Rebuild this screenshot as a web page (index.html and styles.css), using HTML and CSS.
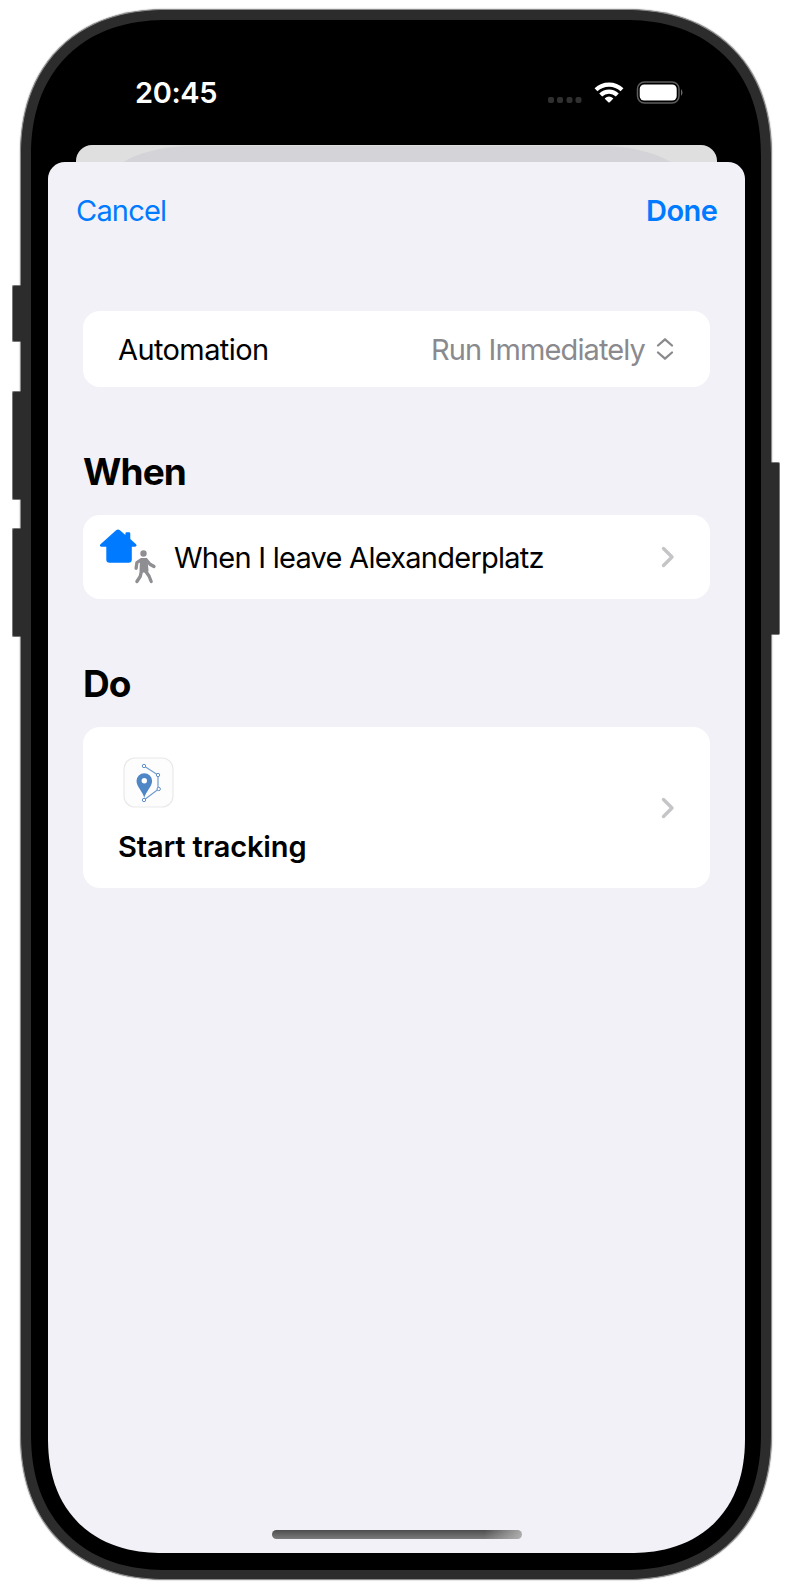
FILE: index.html
```html
<!DOCTYPE html>
<html lang="en">
<head>
<meta charset="utf-8">
<title>Automation</title>
<link rel="stylesheet" href="styles.css">
</head>
<body>
<div class="phone">
  <span class="key key-mute"></span>
  <span class="key key-up"></span>
  <span class="key key-down"></span>
  <span class="key key-power"></span>
  <div class="bezel">
    <div class="screen">
      <header class="status">
        <span class="clock">20:45</span>
        <svg class="status-icons" viewBox="0 0 138 24" aria-hidden="true">
          <g fill="#303031"><rect x="0" y="16" width="6" height="6" rx="2"/><rect x="9" y="16" width="6" height="6" rx="2"/><rect x="18.500" y="16" width="6" height="6" rx="2"/><rect x="27.500" y="16" width="6" height="6" rx="2"/></g>
          <g fill="none" stroke="#fff" stroke-width="4.200"><path d="M48 8.700a19 19 0 0 1 26 0"/><path d="M52.700 13.900a12 12 0 0 1 16.600 0"/></g>
          <path d="M56.600 17.500q4.400-3.800 8.800 0L61.700 21.300q-.7.600-1.400 0z" fill="#fff"/>
          <rect x="89.500" y="1" width="41.500" height="21" rx="7" fill="none" stroke="#5d5d5d" stroke-width="1.500"/>
          <rect x="91.700" y="3.500" width="37" height="16" rx="4.500" fill="#fff"/>
          <path d="M133 8q3 3.500 0 7z" fill="#6a6a6a"/>
        </svg>
      </header>
      <div class="back-sheet"><span class="back-card"></span></div>
      <main class="sheet">
        <nav class="nav"><span class="cancel">Cancel</span><span class="done">Done</span></nav>
        <section class="card mode">
          <span class="label">Automation</span>
          <span class="value">Run Immediately</span>
          <svg class="updown" viewBox="0 0 18 24"><path d="M2 8.500l7-6.200 7 6.200M2 15.500l7 6.200 7-6.200"/></svg>
        </section>
        <h2 class="title when">When</h2>
        <section class="card trigger">
          <svg class="trigger-icon" viewBox="0 0 58 56">
            <path d="M16.100 1.300q1.900-1.600 3.800 0l5.500 4.800V4.500q0-1.200 1.200-1.200h2.500q1.200 0 1.200 1.200v5.600l5.500 4.800q1.200 1.200.5 2.200-.5.700-1.600.700h-2.900v12.700q0 3.200-3.200 3.200H9.500q-3.200 0-3.200-3.200V17.800H1.600q-1.200 0-1.500-.8-.5-1 .7-2z" fill="#007aff"/>
            <g fill="none" stroke="#8e8e93" stroke-linecap="round" stroke-linejoin="round"><circle cx="43.500" cy="24.500" r="3.200" fill="#8e8e93" stroke="none"/><path d="M42 31h3.500l1 10.500h-5z" fill="#8e8e93" stroke-width="4"/><path d="M41.500 30.700l-4.600 3-.8 5.600M46 30.500l4 4.700 4 2.300M41.500 42l-1.300 5.500-3.300 5M45.500 42l3.500 5 2.200 5.500" stroke-width="3.300"/></g>
          </svg>
          <span class="trigger-text">When I leave Alexanderplatz</span>
          <svg class="chevron" viewBox="0 0 14 22"><path d="M2.500 2.500L11 11l-8.500 8.500"/></svg>
        </section>
        <h2 class="title do">Do</h2>
        <section class="card action">
          <div class="action-body">
            <svg class="app-icon" viewBox="0 0 52 52">
              <rect x="1" y="1" width="49" height="49" rx="11" fill="#fdfdfd" stroke="#e9e9e9" stroke-width="1.200"/>
              <path d="M21.300 41C20 35 13.500 29.500 13.500 24a7.800 7.800 0 0 1 15.600 0c0 5.500-6.500 11-7.800 17z" fill="#4f86c6"/>
              <circle cx="21.300" cy="23.700" r="2.700" fill="#fff"/>
              <path d="M21 9l14 9v14.500L21 43" fill="none" stroke="#6f9ad0" stroke-width="1.200"/>
              <g fill="#fff" stroke="#5f8fcb"><circle cx="21" cy="9" r="1.700"/><circle cx="35" cy="18" r="1.700"/><circle cx="35.700" cy="32" r="1.700"/><circle cx="21" cy="43" r="1.700"/></g>
            </svg>
            <span class="action-text">Start tracking</span>
          </div>
          <svg class="chevron" viewBox="0 0 14 22"><path d="M2.500 2.500L11 11l-8.500 8.500"/></svg>
        </section>
        <span class="home-bar"></span>
      </main>
    </div>
  </div>
</div>
</body>
</html>
```
FILE: styles.css
```css
* { box-sizing: border-box; }
body {
  margin: 0;
  padding: 9px 20px 4px;
  height: 1585px;
  background: #fff;
  color: #000;
  font-family: Inter, sans-serif;
  font-size: 29px;
  line-height: 36px;
  overflow: hidden;
}
.phone {
  position: relative;
  width: 752px;
  height: 1571px;
  padding: 10px;
  border: 1px solid #8b8b8b;
  border-radius: 134px;
  background: #2c2c2c;
  box-shadow: 0 0 1.5px #888;
}
.key {
  position: absolute;
  left: -9px;
  width: 9px;
  background: #2c2c2c;
  border: 1px solid #777;
  border-right-color: #2c2c2c;
  border-radius: 2px 0 0 2px;
}
.key-mute { top: 275px; height: 57px; }
.key-up { top: 381px; height: 109px; }
.key-down { top: 518px; height: 109px; }
.key-power {
  left: 750px;
  top: 452px;
  height: 173px;
  border: 1px solid #777;
  border-left-color: #2c2c2c;
  border-radius: 0 2px 2px 0;
}
.bezel {
  width: 730px;
  height: 1550px;
  padding: 0 16px 17px 17px;
  border-radius: 123px;
  background: #000;
}
.screen {
  height: 100%;
  display: flex;
  flex-direction: column;
  overflow: hidden;
  border-radius: 0 0 103px 103px;
}
@supports (corner-shape: superellipse(1.2)) {
  .phone { border-radius: 147px; corner-shape: superellipse(1.17); }
  .bezel { border-radius: 136px; corner-shape: superellipse(1.17); }
  .screen { border-radius: 0 0 115px 115px; corner-shape: superellipse(1.18); }
}
.status {
  height: 125px;
  flex: none;
  display: flex;
  align-items: flex-start;
  justify-content: space-between;
  padding: 55px 59px 0 87px;
  color: #fff;
}
.clock { font-weight: 600; letter-spacing: -.4px; }
.status-icons { width: 138px; height: 24px; margin-top: 6px; }
.back-sheet {
  height: 17px;
  flex: none;
  margin: 0 28px;
  border-radius: 16px 16px 0 0;
  background: #dfdfdf;
  overflow: hidden;
  display: flex;
  justify-content: center;
}
.back-card {
  flex: none;
  width: 590px;
  height: 60px;
  margin-top: 1px;
  border-radius: 90px 90px 0 0 / 45px 45px 0 0;
  background: #d4d3d8;
}
.sheet {
  flex: 1;
  display: flex;
  flex-direction: column;
  padding: 0 35px;
  border-radius: 17px 17px 0 0;
  background: #f2f1f7;
}
.nav {
  display: flex;
  justify-content: space-between;
  margin: 31px -7px 82px;
  color: #007aff;
}
.cancel { letter-spacing: -.8px; }
.done { font-weight: 600; letter-spacing: -.5px; margin-right: -.5px; }
.card {
  flex: none;
  display: flex;
  align-items: center;
  border-radius: 17px;
  background: #fff;
}
.mode { height: 76px; padding: 2px 36px 0 35px; }
.label { margin-right: auto; letter-spacing: -.6px; }
.value { color: #8a8a8e; letter-spacing: -.88px; }
.updown { width: 18px; height: 24px; margin: -3px 0 0 11px; }
.updown path { fill: none; stroke: #8a8a8e; stroke-width: 2.3; stroke-linecap: round; stroke-linejoin: round; }
.title { margin: 0; font-size: 37px; line-height: 44px; font-weight: 700; letter-spacing: -.9px; }
.when { margin-top: 63px; }
.do { margin-top: 63px; }
.trigger { height: 84px; margin-top: 21px; padding: 0 35px 0 17px; }
.trigger-icon { width: 58px; height: 56px; margin-right: 16px; }
.trigger-text { margin: 1px auto 0 0; letter-spacing: -.74px; }
.chevron { width: 14px; height: 22px; }
.chevron path { fill: none; stroke: #c5c5c7; stroke-width: 3.4; stroke-linecap: round; stroke-linejoin: round; }
.action { height: 161px; margin-top: 21px; padding: 0 35px; justify-content: space-between; }
.action-body { display: flex; flex-direction: column; align-items: flex-start; gap: 20px; padding-top: 6px; }
.app-icon { width: 52px; height: 52px; margin-left: 5px; }
.action-text { font-weight: 600; letter-spacing: -.15px; }
.home-bar {
  width: 250px;
  height: 9px;
  margin: auto auto 14px;
  border-radius: 5px;
  background: linear-gradient(90deg, transparent 85%, rgba(190, 190, 190, .8)), linear-gradient(#4d4d4d, #7b7b7b);
}
```
